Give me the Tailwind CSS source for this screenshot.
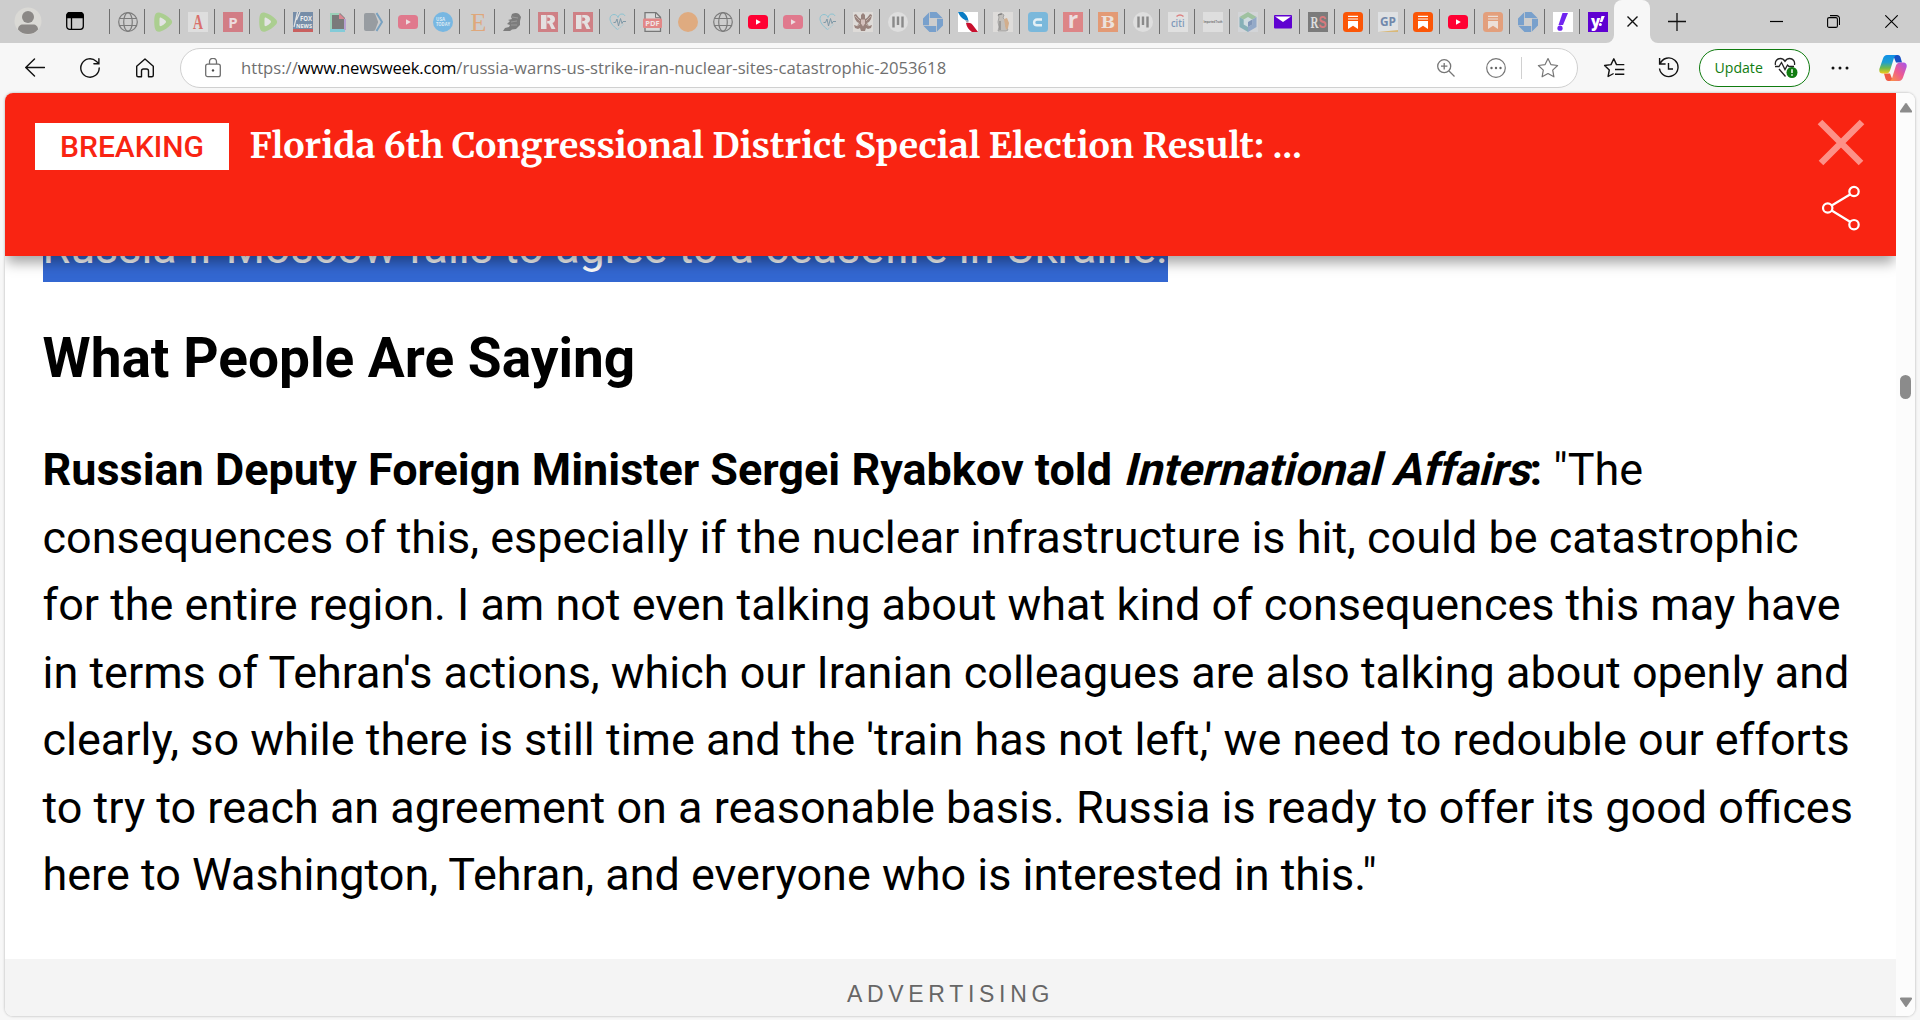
<!DOCTYPE html>
<html lang="en">
<head>
    <meta charset="UTF-8">
    <meta name="viewport" content="width=device-width, initial-scale=1.0">
    <title>Newsweek</title>
    <script src="https://cdn.jsdelivr.net/npm/@tailwindcss/browser@4"></script>
</head>
<body class="bg-[#f7f7f7] h-screen overflow-hidden flex flex-col font-['Open_Sans',sans-serif] text-black">

    <!-- Tab strip -->
    <div class="h-[43px] shrink-0 bg-[#cdcdcd] flex">
        <div class="w-[109px] shrink-0 flex items-center pl-[14px] pb-px">
            <svg class="w-7 h-7 shrink-0" viewBox="0 0 28 28">
                <circle cx="14" cy="14" r="13.5" fill="#dad9d5"/>
                <circle cx="14" cy="10" r="6" fill="#8b8886"/>
                <path d="M4 22.5c0-3 2-5 5-5h10c3 0 5 2 5 5-2.500 3-6 4.500-10 4.500s-7.500-1.500-10-4.500z" fill="#8b8886"/>
            </svg>
            <svg class="w-[18px] h-[18px] shrink-0 ml-6" viewBox="0 0 18 18" fill="none" stroke="#000" stroke-width="1.300">
                <rect x=".7" y=".7" width="16.600" height="16.600" rx="3"/>
                <path d="M1 3.500a3 3 0 0 1 3-3h10a3 3 0 0 1 3 3v2H1z" fill="#000"/>
                <path d="M5.500 5v12"/>
            </svg>
        </div>
        <div id="tabs" class="flex"></div>
        <div class="relative w-9 h-[43px] bg-[#f7f7f7] rounded-t-lg flex items-center justify-center">
            <svg class="absolute -left-2 bottom-0 w-2 h-2" viewBox="0 0 8 8"><path d="M8 0v8H0a8 8 0 0 0 8-8z" fill="#f7f7f7"/></svg>
            <svg class="absolute -right-2 bottom-0 w-2 h-2" viewBox="0 0 8 8"><path d="M0 0v8h8a8 8 0 0 1-8-8z" fill="#f7f7f7"/></svg>
            <svg class="w-[11px] h-[11px]" viewBox="0 0 11 11" stroke="#111" stroke-width="1.400"><path d="M.5.5l10 10M10.500.5l-10 10"/></svg>
        </div>
        <div class="flex-1 flex items-center pl-[18px]">
            <svg class="w-[18px] h-[18px]" viewBox="0 0 18 18" stroke="#111" stroke-width="1.300"><path d="M9 0v18M0 8.500h18"/></svg>
            <svg class="w-[13px] h-[13px] ml-auto" viewBox="0 0 13 13" stroke="#000" stroke-width="1.200"><path d="M0 6.500h13"/></svg>
            <svg class="w-[13px] h-[13px] ml-[44px]" viewBox="0 0 13 13" fill="none" stroke="#000" stroke-width="1.100">
                <rect x=".6" y="2.600" width="9.800" height="9.800" rx="1.500"/>
                <path d="M3 .6h6.500a3 3 0 0 1 3 3V10"/>
            </svg>
            <svg class="w-[13px] h-[13px] ml-[45px] mr-[22px]" viewBox="0 0 13 13" stroke="#000" stroke-width="1.100"><path d="M.3.3l12.400 12.400M12.700.3L.3 12.700"/></svg>
        </div>
    </div>

    <!-- Toolbar -->
    <div class="h-[50px] shrink-0 flex items-center">
        <svg class="w-5 h-5 ml-[25px]" viewBox="0 0 20 20" fill="none" stroke="#111" stroke-width="1.400" stroke-linecap="round"><path d="M19.500 9.500H.8M9.500 1L.8 9.500 9.500 18"/></svg>
        <svg class="w-5 h-5 ml-[35px]" viewBox="0 0 20 20" fill="none" stroke="#111" stroke-width="1.400" stroke-linecap="round"><path d="M19.200 10a9.200 9.200 0 1 1-3-6.800l2.600 2.400M18.900.8v5h-5"/></svg>
        <svg class="w-5 h-5 ml-[35px]" viewBox="0 0 20 20" fill="none" stroke="#111" stroke-width="1.400" stroke-linejoin="round"><path d="M1.700 8.300L10 1l8.300 7.300v8.900a1.500 1.500 0 0 1-1.500 1.500h-3.300V13a2 2 0 0 0-2-2h-3a2 2 0 0 0-2 2v5.700H3.200a1.500 1.500 0 0 1-1.500-1.500z"/></svg>

        <div class="ml-[25px] w-[1398px] h-10 rounded-full border border-[#d0d0d0] bg-white flex items-center">
            <svg class="w-4 h-5 ml-6" viewBox="0 0 16 20" fill="none" stroke="#6e6e6e" stroke-width="1.300">
                <rect x=".7" y="6.200" width="14.600" height="12.500" rx="2"/>
                <path d="M4.500 6V3.800a3.500 3.500 0 0 1 7 0V6"/>
                <circle cx="8" cy="12.400" r="1.200" fill="#444" stroke="none"/>
            </svg>
            <div class="ml-5 text-[16.66px] text-[#6f6f6f] whitespace-nowrap">https://<span class="text-black tracking-[-0.2px]">www.newsweek.com</span>/russia-warns-us-strike-iran-nuclear-sites-catastrophic-2053618</div>
            <svg class="w-[18px] h-[18px] ml-auto" viewBox="0 0 18 18" fill="none" stroke="#767676" stroke-width="1.300"><circle cx="7.200" cy="7.200" r="6.500"/><path d="M12 12l5.500 5.500M4 7.200h6.400M7.200 4v6.400"/></svg>
            <svg class="w-5 h-5 ml-[31px]" viewBox="0 0 20 20" fill="none" stroke="#767676" stroke-width="1.200">
                <circle cx="10" cy="10" r="9.300"/>
                <g fill="#666" stroke="none"><circle cx="5.500" cy="10" r="1.200"/><circle cx="10" cy="10" r="1.200"/><circle cx="14.500" cy="10" r="1.200"/></g>
            </svg>
            <div class="w-px h-[22px] bg-[#d0d0d0] ml-[15px]"></div>
            <svg class="w-[22px] h-[22px] ml-[15px] mr-[18px]" viewBox="0 0 22 22" fill="none" stroke="#767676" stroke-width="1.200" stroke-linejoin="round"><path d="M11 1.500l2.900 6.100 6.700.9-4.900 4.600 1.200 6.700L11 16.500l-5.900 3.300 1.200-6.700L1.400 8.500l6.700-.9z"/></svg>
        </div>

        <svg class="w-[22px] h-[22px] ml-[25px]" viewBox="0 0 22 22" fill="none" stroke="#111" stroke-width="1.400" stroke-linejoin="round"><path d="M21.300 7.600h-7.800L10.800 1.800 8 7.600l-6.400.9 4.700 4.500-1.200 6.500 5.500-3M12 12.500h9.300M12 17.300h9.300"/></svg>
        <svg class="w-[22px] h-[22px] ml-[33px]" viewBox="0 0 22 22" fill="none" stroke="#111" stroke-width="1.400"><path d="M2 7A9.300 9.300 0 1 1 1.500 11.500M1.600 1v6h6M10.500 6v6H15"/></svg>

        <div class="ml-[19px] w-[111px] h-[38px] rounded-full border border-[#107c10] bg-white flex items-center">
            <span class="ml-[14.5px] text-[14.1px] text-[#107c10]">Update</span>
            <svg class="w-6 h-6 ml-[11px]" viewBox="0 0 24 24" fill="none" stroke="#222" stroke-width="1.300">
                <path d="M1.500 9C.5 5 3.500 2.500 6.300 2.500c2.200 0 3.700 1.200 4.700 2.800 1-1.600 2.500-2.800 4.700-2.800 3 0 5.500 2.500 4.800 6.500M1 10.500h4l2.500-4 3.500 7 2.500-4.500 1.500 1.500h5M5 13l6.500 7.500"/>
                <circle cx="18" cy="16.500" r="5.500" fill="#107c10" stroke="none"/>
                <path d="M18 13.300v3.800M18 18.300v1.500" stroke="#fff" stroke-width="1.500"/>
            </svg>
        </div>
        <svg class="w-[18px] h-1 ml-[21px]" viewBox="0 0 18 4" fill="#111"><circle cx="2" cy="2" r="1.500"/><circle cx="9" cy="2" r="1.500"/><circle cx="16" cy="2" r="1.500"/></svg>
        <svg class="w-7 h-[26px] ml-[30px]" viewBox="0 0 28 26">
            <defs>
                <linearGradient id="copA" x1="0" y1="0" x2="0" y2="1"><stop offset="0" stop-color="#0f8fe8"/><stop offset=".4" stop-color="#1f9fd0"/><stop offset=".7" stop-color="#6fb94c"/><stop offset="1" stop-color="#f0cc1c"/></linearGradient>
                <linearGradient id="copB" x1="1" y1="0" x2="0" y2="1"><stop offset="0" stop-color="#a455ee"/><stop offset=".5" stop-color="#ee5a90"/><stop offset="1" stop-color="#fb9a3c"/></linearGradient>
            </defs>
            <path d="M14 0h4.500c2 0 3 1.500 3.500 4l1 3.500h-6z" fill="#1750c4"/>
            <path d="M14 26H9.500c-2 0-3-1.500-3.500-4l-1-3.500h6z" fill="#ef5a45"/>
            <path d="M8 0h10c-2 0-3 2-4 6l-2.500 8c-.8 3-2 4.500-4.500 4.500H3.500C1 18.500-.3 16.500.5 13.500l3.500-10C4.800 1.200 6 0 8 0z" fill="url(#copA)"/>
            <path d="M20 26H10c2 0 3-2 4-6l2.500-8c.8-3 2-4.500 4.500-4.500h3.500c2.500 0 3.800 2 3 5l-3.500 10C23.200 24.800 22 26 20 26z" fill="url(#copB)"/>
        </svg>
    </div>

    <!-- Page viewport -->
    <div class="ml-[5px] w-[1910px] h-[923px] rounded-lg bg-white overflow-hidden flex shadow-[0_0_2px_1px_#d4d4d4]">
        <div class="relative w-[1891px] overflow-hidden font-[Roboto,sans-serif]">

            <!-- Breaking news banner -->
            <div class="absolute inset-x-0 top-0 z-10 h-[163px] bg-[#f92412] shadow-[0_9px_12px_-2px_rgba(0,0,0,0.35)] flex items-start justify-between pl-[30px]">
                <div class="flex items-start pt-[30px]">
                    <span class="w-[194px] h-[47px] bg-white text-[#f92412] text-[30px] leading-[47px] font-medium text-center">BREAKING</span>
                    <span class="ml-[20.5px] -mt-[4.5px] text-white text-[35.7px] leading-[54px] font-bold whitespace-nowrap font-[Merriweather,'Noto_Serif',serif]">Florida 6th Congressional District Special Election Result: <span class="tracking-[1px]">...</span></span>
                </div>
                <div class="flex flex-col items-center w-[48px] mr-[31px] pt-[26px]">
                    <svg class="w-12 h-12" viewBox="0 0 48 48" stroke="#fd9188" stroke-width="6.500"><path d="M3 3l41 41M45 3L4 44"/></svg>
                    <svg class="w-[38px] h-[46px] mt-[18px]" viewBox="0 0 38 46" fill="none" stroke="#fff" stroke-width="2.200">
                        <circle cx="32" cy="6.500" r="4.700"/><circle cx="5.700" cy="23" r="4.700"/><circle cx="32" cy="39.700" r="4.700"/>
                        <path d="M9.700 20.500l18.300-11M9.700 25.500l18.300 11.200"/>
                    </svg>
                </div>
            </div>

            <!-- Article -->
            <div class="pl-[37.5px] pt-[121px] text-[44.96px] leading-[67.5px] whitespace-nowrap">
                <p><span class="inline-block h-[67.5px] bg-[#3367d1] text-white">Russia if Moscow fails to agree to a ceasefire in Ukraine.</span></p>
                <h2 class="mt-[35.5px] mb-[37px] text-[55px] leading-[82px] font-bold">What People Are Saying</h2>
                <p>
                    <b>Russian Deputy Foreign Minister Sergei Ryabkov told <span class="inline-block -skew-x-[14deg] origin-[50%_73%]">International Affairs</span>:</b> "The<br>
                    consequences of this, especially if the nuclear infrastructure is hit, could be catastrophic<br>
                    for the entire region. I am not even talking about what kind of consequences this may have<br>
                    in terms of Tehran's actions, which our Iranian colleagues are also talking about openly and<br>
                    clearly, so while there is still time and the 'train has not left,' we need to redouble our efforts<br>
                    to try to reach an agreement on a reasonable basis. Russia is ready to offer its good offices<br>
                    here to Washington, Tehran, and everyone who is interested in this."
                </p>
            </div>
            <div class="mt-[50.5px] h-[60px] bg-[#f4f4f4] pt-[19px] text-center text-[23px] leading-[32px] tracking-[4.7px] text-[#666] font-['Liberation_Sans',sans-serif]">ADVERTISING</div>
        </div>

        <!-- Scrollbar -->
        <div class="w-[19px] bg-[#fcfcfc] flex flex-col items-center">
            <svg class="w-3 h-[10px] mt-[10px]" viewBox="0 0 12 10"><path d="M5.200.5q.8-1 1.600 0L12 8q.3 1.500-1 1.500H1Q-.3 9.500 0 8z" fill="#8b8b8b"/></svg>
            <div class="mt-[262px] w-[11px] h-6 rounded-full bg-[#8b8b8b]"></div>
            <svg class="w-3 h-[10px] mt-auto mb-[9px]" viewBox="0 0 12 10"><path d="M5.200 9.500q.8 1 1.600 0L12 2Q12.300.5 11 .5H1Q-.3.5 0 2z" fill="#8b8b8b"/></svg>
        </div>
    </div>

    <script>
        const youtube = c => `<rect y="3" width="20" height="14" rx="3.500" fill="${c[0]}"/><path d="M8 7.300v5.400l4.800-2.700z" fill="${c[1]}"/>`;
        const substack = c => `<rect width="20" height="20" rx="3.500" fill="${c[0]}"/><path d="M5 9h10v8l-5-3.200L5 17z" fill="${c[1]}"/><path d="M5 4.300h10M5 7h10" stroke="${c[1]}" stroke-width="1.200"/>`;
        const letter = (bg, fg, ch, size, font, y) => `<rect width="20" height="20" fill="${bg}"/><text x="10" y="${y}" text-anchor="middle" font-size="${size}" font-weight="700" font-family="${font}" fill="${fg}">${ch}</text>`;
        const globe = `<g fill="none" stroke="#7b7b7b" stroke-width="1.200"><circle cx="10" cy="10" r="9.300"/><ellipse cx="10" cy="10" rx="4.300" ry="9.300"/><path d="M1.700 6.500h16.600M1.700 13.500h16.600"/></g>`;
        const rumble = `<path d="M1.500 5C2 1.500 4 0 7 .8c4 1.200 8 3.500 11 6.700 1.500 1.500 1.500 3.500 0 5-3 3.200-6.500 5.500-10.500 7-3 1-5.200-.5-5.800-4-.6-3.500-.6-7 -.2-10.500z" fill="#abce90"/><path d="M6.500 6.700c0-1 .8-1.400 1.700-1 1.600.7 3 1.700 4.200 2.800.8.8.8 1.700 0 2.500-1.200 1.200-2.600 2.200-4.200 3-.9.400-1.700 0-1.700-1z" fill="#e3e3e3"/>`;
        const heart = `<path d="M9.500 17.500C5 14 2 10.500 2 6.500 2 4 4 2.500 6 2.500c2 0 3.300 1 4 3 .7-2.500 2-3.500 4-3.500 1.500 0 2.500.8 3 2" fill="none" stroke="#8cc3d2" stroke-width="1"/><path d="M5.500 10.500h2L9 7l1.500 7 2-7.500 1.500 5 1-2h3" fill="none" stroke="#7793a3" stroke-width=".9"/><path d="M9.500 17.500c3-2 4.500-3.500 6-5.500" fill="none" stroke="#9ac8d4" stroke-width="1" stroke-dasharray="1.500 1"/>`;
        const realtor = `<rect width="20" height="20" fill="#cf8085"/><rect x="3" y="3" width="5.500" height="14" fill="#e4e0e0"/><path fill-rule="evenodd" d="M9.200 3H12c3.500 0 5 1.700 5 4.200 0 2-1 3.200-2.600 3.800L17.500 17h-4L11 11.500H9.200z" fill="#e4e0e0"/><path d="M9.200 5.500h1.500q1.500 0 1.500 1.700T10.700 9H9.200z" fill="#cf8085"/>`;
        const medium = `<circle cx="10" cy="10" r="10" fill="#dedede"/><path d="M5.500 4.500v11M10 4.500v8.500M14.500 4.500v11" stroke="#8a8a8a" stroke-width="2.400"/>`;
        const chase = `<path d="M6.800 0h6.700l6 6H6.800zM20 6.800v6.700l-6 6V6.800zM13.200 20H6.500l-6-6h12.700zM0 13.200V6.500l6-6v12.700z" fill="#78a0cc"/>`;

        const favicons = [
            globe,
            rumble,
            `<rect width="20" height="20" fill="#dedede"/><text x="5" y="17" font-size="20" font-weight="700" font-family="Liberation Serif" fill="#d9706c" textLength="10" lengthAdjust="spacingAndGlyphs">A</text>`,
            letter('#d27d85', '#ecdcde', 'P', 15, 'Open Sans', 15.5),
            rumble,
            `<rect width="20" height="17" fill="#768da8"/><rect y="17" width="20" height="3" fill="#c9605f"/><path d="M1 15L4.500 0M3.500 8L7 0" stroke="#e3e3e3" stroke-width="1.200"/><g fill="#eee" font-weight="700" font-family="Open Sans"><text x="7" y="9" font-size="6.500" textLength="12" lengthAdjust="spacingAndGlyphs">FOX</text><text x="3" y="15.500" font-size="6" textLength="16" lengthAdjust="spacingAndGlyphs">NEWS</text></g>`,
            `<path d="M2 1h10l5 5v13H2z" fill="#7a7a7a"/><path d="M2 1h10v2H4v14H2z" fill="#9bd0b8"/><path d="M11 1l6 6h-6z" fill="#d98591"/><path d="M2 17h15v3H2z" fill="#83cbd8"/><path d="M16 7h2v11h-2z" fill="#b7a0d0"/>`,
            `<path d="M1 3q0-2 2-2h7q1.500 0 2.200 1l3 8-3 8q-.7 1-2.200 1H3q-2 0-2-2z" fill="#979ca1"/><path d="M13.500 1l5.500 9-5.500 9" fill="none" stroke="#78a1c0" stroke-width="2"/>`,
            youtube(['#e0798d', '#eedde0']),
            `<circle cx="10" cy="10" r="10" fill="#77b7e2"/><g fill="#dceaf3" font-weight="700" font-family="Open Sans"><text x="3" y="9" font-size="4.800" textLength="9" lengthAdjust="spacingAndGlyphs">USA</text><text x="3" y="13.500" font-size="4.800" textLength="14" lengthAdjust="spacingAndGlyphs">TODAY</text></g>`,
            `<text x="2.500" y="18.500" font-size="26" font-family="Liberation Serif" fill="#dfa77b">E</text>`,
            `<path d="M9 2q4-2 7 0l2 3-1 4v4l-4 4-4 .5L7 19H0l2-3 4-1 1-2-3-1 3-3-2-1 4-1-1-2z" fill="#7c7c7c"/><path d="M9 5l6 1M8 10l6-1M8 13h6" stroke="#a8a8a8" stroke-width=".7"/>`,
            realtor,
            realtor,
            heart,
            `<path d="M2 .7h11l4.500 4.500V19.300H2z" fill="#d9d9d9" stroke="#777" stroke-width="1.300"/><path d="M12.500.7v5h5" fill="none" stroke="#777"/><rect y="6.500" width="19" height="9.500" rx="1" fill="#e28787"/><text x="9.500" y="14" text-anchor="middle" font-size="7.500" font-weight="700" font-family="Open Sans" fill="#f0e4e4">PDF</text>`,
            `<circle cx="10" cy="10" r="10" fill="#dfab80"/>`,
            globe,
            youtube(['#ff0033', '#fff']),
            youtube(['#e0798d', '#eedde0']),
            heart,
            `<rect width="20" height="20" fill="#dedbd8"/><path d="M1 3l2-1 3 4 2 1V3l2-2 2 2v4l2-1 3-4 2 1-1 4-2 3-2 1 2 3 3-1-1 3-3 1-2-1-1 3h-4l-1-3-2 1-3-1-1-3 3 1 2-3-2-1-2-3z" fill="#98827c"/><path d="M8 7.500h4v4l-2 3-2-3z" fill="#d3c0bc"/><path d="M2 4l5 5M18 4l-5 5M4 14l3-2M16 14l-3-2" stroke="#c9bcb6" stroke-width=".8"/>`,
            medium,
            chase,
            `<rect width="20" height="20" fill="#fff"/><path d="M0 0h5c3 2 5 5 5.500 9L7 8C3.500 6.500 1.500 3.500 0 0z" fill="#0a7cc4"/><path d="M8 11c3-1 6 0 7.500 3 1.500 2 3 4 4.500 6h-6c-3-2-5.500-5-6-9z" fill="#c8102e"/><path d="M7 8l4 1-2 2z" fill="#9aa4ad"/>`,
            `<rect width="20" height="20" fill="#dedcda"/><path d="M5 3l3-2 3 2-1 3 3 3v5l2 4-2 1H5l1-4-1-5 1-5z" fill="#c2bfbb" stroke="#999" stroke-width=".8"/><path d="M11 7l3-1 2 5-1 5-2 2-1-5z" fill="#d2ae8c"/><path d="M5 3l4-1M7 9v9" stroke="#777"/>`,
            `<rect width="20" height="20" rx="3.500" fill="#7ab8db"/><path d="M14 7.500H9a2.700 2.700 0 0 0 0 5.800h5" fill="none" stroke="#e3eff5" stroke-width="2.400"/>`,
            letter('#dd8587', '#ecdedf', 'r', 23, 'Open Sans', 16),
            letter('#e39a75', '#ece2dc', 'B', 17, 'DejaVu Serif', 16),
            medium,
            `<rect width="20" height="20" fill="#e0e0e0"/><text x="3" y="15" font-size="11.500" font-weight="600" font-family="Open Sans" fill="#7f9aba" textLength="13.500" lengthAdjust="spacingAndGlyphs">citi</text><path d="M8.500 4.500q3.500-3 7 0" fill="none" stroke="#dc8181" stroke-width="1.400"/>`,
            `<rect width="20" height="20" fill="#dedede"/><text x=".5" y="10.500" font-size="2.600" font-weight="700" font-family="Open Sans" fill="#777" textLength="19">Imported Truth</text>`,
            `<rect width="20" height="20" fill="#d3d5d8"/><path d="M10 0l8.500 5L10 10 1.500 5z" fill="#9fc2a0"/><path d="M1.500 5L10 10v10l-8.500-5z" fill="#86b0b7"/><path d="M18.500 5L10 10v10l8.500-5z" fill="#93a9c8"/><path d="M10 5l4.300 2.500v5L10 15l-4.300-2.500v-5z" fill="#cfdbe0"/><path d="M10 10l4.300-2.500v5L10 15z" fill="#8196b8"/>`,
            `<rect x="1" y="3" width="18" height="13.500" rx="1" fill="#5f01d1"/><path d="M2 4.500h16L10 10z" fill="#fff"/>`,
            `<rect width="20" height="20" fill="#7b7b7b"/><text x="2.500" y="15.500" font-size="16" font-weight="700" font-family="Liberation Serif" fill="#ddd" textLength="8" lengthAdjust="spacingAndGlyphs">R</text><text x="10.500" y="16" font-size="16" font-weight="700" font-family="Liberation Sans" fill="#d8797d" textLength="8" lengthAdjust="spacingAndGlyphs">S</text>`,
            substack(['#fb5607', '#fff']),
            `<rect width="20" height="20" fill="#dfe1e3"/><text x="2" y="14" font-size="12" font-weight="700" font-family="Open Sans" fill="#7188ab" textLength="16" lengthAdjust="spacingAndGlyphs">GP</text><path d="M0 20l20-2v2z" fill="#d9b878"/>`,
            substack(['#fb5607', '#fff']),
            youtube(['#ff0033', '#fff']),
            substack(['#e39f7c', '#ecdfd8']),
            chase,
            `<rect width="20" height="20" fill="#fff"/><path d="M9.500 1h5.500L10 13H5.500z" fill="#7125f0"/><circle cx="7" cy="16.200" r="2.600" fill="#7125f0"/>`,
            `<rect width="20" height="20" fill="#5f01d1"/><text x="3" y="14.500" font-size="15" font-weight="800" font-family="Open Sans" fill="#fff">y</text><path d="M13.500 4h3.300l-2.500 6h-2.600z" fill="#fff"/><circle cx="12.300" cy="12.500" r="1.500" fill="#fff"/>`
        ];

        document.getElementById('tabs').innerHTML = favicons.map(icon => `
            <div class="w-[35px] flex items-center">
                <div class="w-px h-[25px] bg-[#6f6f6f]"></div>
                <svg class="w-5 h-5 ml-2" viewBox="0 0 20 20">${icon}</svg>
            </div>`).join('');
    </script>
</body>
</html>
